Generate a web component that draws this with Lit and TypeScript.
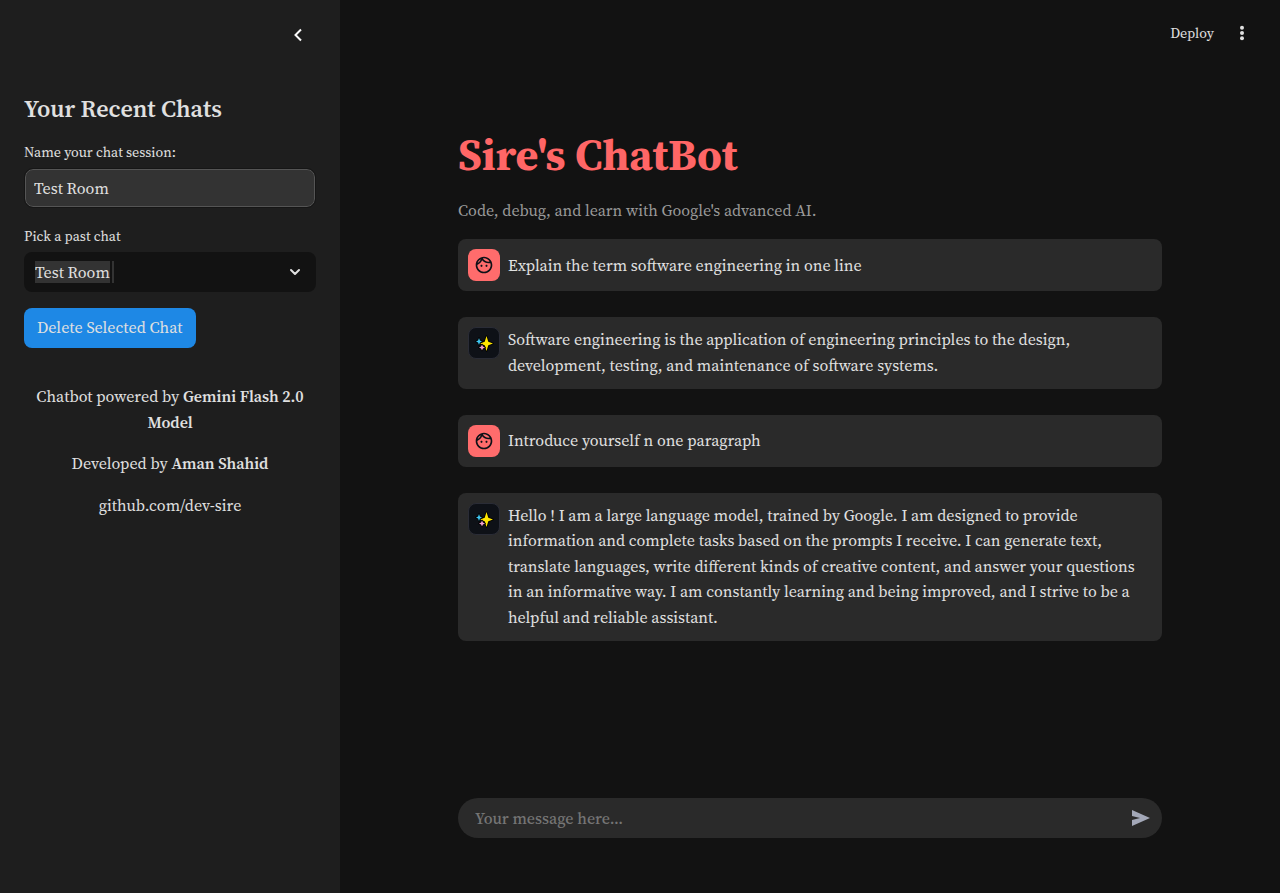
import { LitElement, html, css, svg } from "lit";
import { customElement, property, state } from "lit/decorators.js";
import { classMap } from "lit/directives/class-map.js";

type Author = "user" | "assistant";
interface Message {
  author: Author;
  text: string;
}

const faceIcon = svg`<path d="M10.25 13c0 .69-.56 1.25-1.25 1.25S7.75 13.69 7.75 13s.56-1.25 1.25-1.25 1.25.56 1.25 1.25zM15 11.75c-.69 0-1.25.56-1.25 1.25s.56 1.25 1.25 1.25 1.25-.56 1.25-1.25-.56-1.25-1.25-1.25zm7 .25c0 5.52-4.48 10-10 10S2 17.52 2 12 6.48 2 12 2s10 4.48 10 10zM10.66 4.12C12.06 6.44 14.6 8 17.5 8c.46 0 .91-.05 1.34-.12C17.44 5.56 14.9 4 12 4c-.46 0-.91.05-1.34.12zM4.42 9.47c1.71-.97 3.03-2.55 3.66-4.44C6.37 6 5.05 7.58 4.42 9.47zM20 12c0-.78-.12-1.53-.33-2.24-.7.15-1.42.24-2.17.24-3.13 0-5.92-1.44-7.76-3.69C8.69 8.87 6.6 10.88 4 11.86c.01.04 0 .09 0 .14 0 4.42 3.58 8 8 8s8-3.58 8-8z"/>`;

const sparklesIcon = svg`
  <g stroke="#000" stroke-width="1.600" stroke-linejoin="round" paint-order="stroke">
    <path fill="#ffe600" d="M10.500 1l1.800 5.700L17 8.500l-4.700 1.800L10.500 16l-1.800-5.700L4 8.500l4.700-1.800z"/>
    <path fill="#40c8f4" d="M3 3l.9 2.600 2.100.9-2.100.9L3 10l-.9-2.600L0 6.500l2.100-.9z"/>
    <path fill="#f4a2d0" d="M6 9.500l.9 2.100 2.100.9-2.100.9L6 15.500l-.9-2.100L3 12.500l2.100-.9z"/>
  </g>`;

@customElement("chat-message")
class ChatMessage extends LitElement {
  @property() author: Author = "user";
  @property() text = "";

  static styles = css`
    :host {
      display: block;
    }
    .message {
      display: flex;
      align-items: flex-start;
      gap: 8px;
      padding: 10px;
      border-radius: 8px;
      background: #2a2a2a;
    }
    .avatar {
      flex: none;
      display: flex;
      align-items: center;
      justify-content: center;
      box-sizing: border-box;
      width: 32px;
      height: 32px;
      border-radius: 8px;
      background: #ff6c6c;
    }
    .avatar.assistant {
      border: 1px solid #2a2c36;
      background: #0e1117;
    }
    .face {
      width: 20px;
      height: 20px;
      fill: #0e1117;
    }
    .sparkles {
      width: 17px;
      height: 16px;
      overflow: visible;
    }
    .text {
      flex: 1;
      min-width: 0;
      margin: 0;
      line-height: 1.6;
    }
    .user .text {
      align-self: center;
    }
  `;

  render() {
    const assistant = this.author === "assistant";
    return html`
      <article class=${classMap({ message: true, user: !assistant })}>
        <div class=${classMap({ avatar: true, assistant })}>
          ${assistant
            ? html`<svg class="sparkles" viewBox="0 0 17 16" aria-hidden="true">${sparklesIcon}</svg>`
            : html`<svg class="face" viewBox="0 0 24 24" aria-hidden="true">${faceIcon}</svg>`}
        </div>
        <p class="text">${this.text}</p>
      </article>
    `;
  }
}

@customElement("chat-sidebar")
class ChatSidebar extends LitElement {
  @state() private sessions = ["Test Room"];

  static styles = css`
    :host {
      display: block;
      box-sizing: border-box;
      padding: 24px;
      background: #1e1e1e;
    }
    .top {
      display: flex;
      justify-content: flex-end;
      padding-right: 8px;
      margin-bottom: 46px;
    }
    button,
    input,
    select {
      font: inherit;
      color: inherit;
    }
    .collapse {
      display: flex;
      padding: 0;
      border: 0;
      background: none;
    }
    .collapse svg {
      width: 20px;
      height: 22px;
    }
    .heading {
      margin: 0 0 14px;
      font-size: 24px;
      line-height: 34px;
      font-weight: 600;
    }
    .field {
      display: flex;
      flex-direction: column;
      margin-bottom: 16px;
    }
    .label {
      margin-bottom: 4px;
      font-size: 14px;
      line-height: 24px;
    }
    .control {
      box-sizing: border-box;
      border-radius: 8px;
    }
    .name {
      height: 38px;
      margin: 1px;
      padding: 0 8px;
      border: 1px solid #555;
      outline: 1px solid #161616;
      background: #333;
    }
    .picker {
      display: grid;
      align-items: center;
    }
    .picker > * {
      grid-area: 1 / 1;
    }
    .select {
      appearance: none;
      width: 100%;
      height: 40px;
      padding: 0 40px 0 11px;
      border: 0;
      outline: none;
      background:
        linear-gradient(#333, #333) 11px 9px / 75px 22px no-repeat,
        linear-gradient(#333, #333) 88px 9px / 2px 22px no-repeat,
        #121212;
    }
    .chevron {
      justify-self: end;
      width: 20px;
      height: 20px;
      margin-right: 11px;
      pointer-events: none;
    }
    .delete {
      height: 40px;
      padding: 0 13px;
      border: 0;
      border-radius: 8px;
      background: #1e88e5;
      line-height: 1.6;
    }
    .credits {
      margin-top: 36px;
      text-align: center;
      line-height: 1.6;
    }
    .credits p {
      margin: 0 0 16px;
    }
    .credits strong {
      font-weight: 600;
    }
    .credits a {
      color: inherit;
      text-decoration: none;
    }
  `;

  render() {
    return html`
      <div class="top">
        <button class="collapse" aria-label="Collapse sidebar">
          <svg viewBox="0 0 20 22" fill="none" stroke="#fafafa" stroke-width="2" aria-hidden="true">
            <path d="M13 5.500L7.500 11l5.500 5.500" />
          </svg>
        </button>
      </div>
      <h2 class="heading">Your Recent Chats</h2>
      <div class="field">
        <label class="label" for="session-name">Name your chat session:</label>
        <input class="control name" id="session-name" type="text" value="Test Room" />
      </div>
      <div class="field">
        <label class="label" for="past-chat">Pick a past chat</label>
        <div class="picker">
          <select class="control select" id="past-chat">
            ${this.sessions.map((s) => html`<option>${s}</option>`)}
          </select>
          <svg class="chevron" viewBox="0 0 20 20" fill="none" stroke="#e0e0e0" stroke-width="2" stroke-linecap="round" stroke-linejoin="round" aria-hidden="true">
            <path d="M6 8l4 4 4-4" />
          </svg>
        </div>
      </div>
      <button class="delete">Delete Selected Chat</button>
      <div class="credits">
        <p>Chatbot powered by <strong>Gemini Flash 2.0 Model</strong></p>
        <p>Developed by <strong>Aman Shahid</strong></p>
        <p><a href="https://github.com/dev-sire">github.com/dev-sire</a></p>
      </div>
    `;
  }
}

@customElement("app-root")
class AppRoot extends LitElement {
  @state() private messages: Message[] = [
    { author: "user", text: "Explain the term software engineering in one line" },
    {
      author: "assistant",
      text: "Software engineering is the application of engineering principles to the design, development, testing, and maintenance of software systems.",
    },
    { author: "user", text: "Introduce yourself n one paragraph" },
    {
      author: "assistant",
      text: "Hello ! I am a large language model, trained by Google. I am designed to provide information and complete tasks based on the prompts I receive. I can generate text, translate languages, write different kinds of creative content, and answer your questions in an informative way. I am constantly learning and being improved, and I strive to be a helpful and reliable assistant.",
    },
  ];

  static styles = css`
    :host {
      display: grid;
      grid-template-columns: 340px minmax(0, 1fr);
      min-height: 100vh;
      background: #121212;
      color: #e0e0e0;
      font-family: "Source Serif Pro", "Source Serif 4", "Liberation Serif", serif;
      font-size: 16px;
    }
    button,
    input {
      font: inherit;
      color: inherit;
    }
    button {
      display: flex;
      padding: 0;
      border: 0;
      background: none;
    }
    .main {
      display: flex;
      flex-direction: column;
    }
    .toolbar {
      display: flex;
      align-items: center;
      justify-content: flex-end;
      gap: 18px;
      height: 66px;
      padding: 0 28px;
    }
    .deploy {
      font-size: 14px;
    }
    .menu svg {
      width: 20px;
      height: 20px;
      fill: #e0e0e0;
    }
    .column {
      box-sizing: border-box;
      width: 100%;
      max-width: 736px;
      margin: 0 auto;
      padding: 0 16px;
    }
    .content {
      flex: 1;
      padding-top: 63px;
    }
    .title {
      margin: 0 0 16px;
      font-size: 44px;
      line-height: 1.2;
      font-weight: 700;
      color: #ff6666;
    }
    .subtitle {
      margin: 0 0 16px;
      line-height: 1.6;
      color: #999;
    }
    .messages {
      display: flex;
      flex-direction: column;
      gap: 26px;
    }
    .footer {
      padding-top: 32px;
      padding-bottom: 55px;
    }
    .composer {
      display: flex;
      align-items: center;
      height: 40px;
      padding: 0 11px 0 17px;
      border-radius: 20px;
      background: #2a2a2a;
    }
    .prompt {
      flex: 1;
      min-width: 0;
      height: 24px;
      padding: 0;
      border: 0;
      outline: 0;
      background: none;
      font-weight: 500;
    }
    .prompt::placeholder {
      color: #757575;
      opacity: 1;
    }
    .send svg {
      width: 20px;
      height: 20px;
      fill: #a3a8b8;
    }
  `;

  render() {
    return html`
      <chat-sidebar></chat-sidebar>
      <div class="main">
        <header class="toolbar">
          <button class="deploy">Deploy</button>
          <button class="menu" aria-label="Main menu">
            <svg viewBox="0 0 20 20" aria-hidden="true">
              <circle cx="10" cy="4.800" r="2" />
              <circle cx="10" cy="10" r="2" />
              <circle cx="10" cy="15.200" r="2" />
            </svg>
          </button>
        </header>
        <main class="column content">
          <h1 class="title">Sire's ChatBot</h1>
          <p class="subtitle">Code, debug, and learn with Google's advanced AI.</p>
          <div class="messages">
            ${this.messages.map((m) => html`<chat-message .author=${m.author} .text=${m.text}></chat-message>`)}
          </div>
        </main>
        <footer class="column footer">
          <form class="composer" @submit=${(e: Event) => e.preventDefault()}>
            <input class="prompt" type="text" placeholder="Your message here..." aria-label="Your message" />
            <button class="send" aria-label="Send message">
              <svg viewBox="0 0 20 20" aria-hidden="true"><path d="M1 2l18 8-18 8v-6l8-2-8-2z" /></svg>
            </button>
          </form>
        </footer>
      </div>
    `;
  }
}
